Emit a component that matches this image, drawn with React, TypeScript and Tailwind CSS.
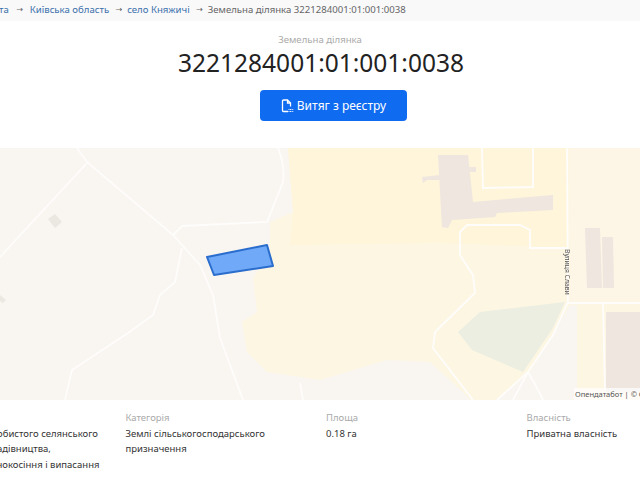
export default function App() {
  const road = "fill-none stroke-[#fefdfb]";
  return (
    <div className="w-[640px] h-[480px] overflow-hidden bg-white font-['Noto_Sans',sans-serif] text-[#333]">
      <div className="h-[22px] bg-[#f9f9fa] flex items-center whitespace-nowrap text-[9.6px] text-[#666] -mt-[1px]">
        <a className="text-[#3a70ab] -ml-[1px]">та</a>
        <span className="ml-[6px] mr-[5px] w-[10px] text-center font-['DejaVu_Sans',sans-serif] text-[8px]">→</span>
        <a className="text-[#3a70ab]">Київська область</a>
        <span className="ml-[5px] mr-[3px] w-[10px] text-center font-['DejaVu_Sans',sans-serif] text-[8px]">→</span>
        <a className="text-[#3a70ab]">село Княжичі</a>
        <span className="ml-[5px] mr-[3px] w-[10px] text-center font-['DejaVu_Sans',sans-serif] text-[8px]">→</span>
        <span>Земельна ділянка 3221284001:01:001:0038</span>
      </div>
      <div className="h-[127px] flex flex-col items-center pt-[12px]">
        <div className="text-[9.6px] leading-[14px] text-[#aaa]">Земельна ділянка</div>
        <h1 className="text-[24.5px] leading-[30px] mt-[1px] ml-[2px] text-[#222]">3221284001:01:001:0038</h1>
        <button className="mt-[12px] self-start ml-[260px] w-[147px] h-[31px] rounded-[4px] bg-[#0f6bf0] text-white text-[12px] flex items-center justify-center gap-[3px]">
          <svg width="13" height="14" viewBox="0 0 13 14" fill="none" stroke="white" strokeWidth="1.3">
            <path d="M7 12.5H2.5a1 1 0 0 1-1-1V2a1 1 0 0 1 1-1h4l3 3v3.5" />
            <path d="M6.5 1v3h3" />
            <path d="M7.5 10.5h5M7.5 12.5h5" strokeWidth="1.2" strokeDasharray="1 0.6" />
          </svg>
          Витяг з реєстру
        </button>
      </div>
      <div className="relative h-[252px] overflow-hidden">
        <svg width="640" height="252" viewBox="0 148 640 252" className="block bg-[#f9f6f2] blur-[0.5px]">
          <path d="M288 148L293 212L270 222L270 252L253 278L257 312L242 322L247 352L267 372L320 380L387 360L430 362L463 392L470 400L497 400L530 372L570 305L577 305L577 400L640 400L640 148Z" fill="#fdf6e3" />
          <path d="M288 148L293 212L290 245L440 243L567 248L567 148Z" fill="#fef5da" />
          <path d="M570 148H640V303H570Z" fill="#fdf6e6" />
          <path d="M458 332L480 312L565 302L553 328L523 372L472 350Z" fill="#ebeee1" />
          <path d="M438 155L468 155L473 202L553 195L553 210L497 213L495 217L452 220L448 228L442 227Z" fill="#efe6df" />
          <path d="M422 177L440 175L440 180L427 180L423 183ZM468 167L476 167L476 172L470 172Z" fill="#efe6df" />
          <path d="M585 228L600 228L602 288L587 288ZM602 237L613 237L614 288L603 288ZM606 312H640V392H606Z" fill="#efe6df" />
          <path d="M48 219L55 214L62 222L55 228ZM0 295L6 300L3 303L0 301Z" fill="#ebe8e2" />
          <g className={road} strokeWidth="1.8">
            <path d="M77 148L87 162L173 235L200 265L213 295L220 338L243 400" />
            <path d="M87 163L0 257" />
            <path d="M173 235L182 226L267 222L283 182Q285 165 278 148" />
            <path d="M182 248L175 282L160 295L153 315L128 333L72 370L65 400" />
            <path d="M300 383L303 400" />
            <path d="M567 148L568 302L553 335L528 372L497 400" />
            <path d="M528 372L513 400M528 372Q536 385 543 400" />
            <path d="M568 303H640M603 303L605 390" />
            <path d="M567 248H530V230L520 225H467L460 232V255L473 275L475 293L435 332L433 348L473 400" />
            <path d="M482 148L483 188L533 187V148" />
          </g>
          <path d="M207 257L267 245L273 266L214 275Z" fill="#6fa9f8" stroke="#2a6dcc" strokeWidth="2" strokeLinejoin="round" />
          <text x="565" y="249" transform="rotate(90 565 249)" fontSize="6.8" fill="#555" fontFamily="Noto Sans">Вулиця Слави</text>
        </svg>
        <div className="absolute right-0 bottom-0 w-[66px] h-[12px] overflow-hidden whitespace-nowrap bg-white/70 pl-[1px] text-[7.5px] leading-[12px] text-[#555]">Опендатабот | © OpenStreetMap</div>
      </div>
      <div className="-ml-[75px] w-[802px] grid grid-cols-[repeat(4,200.5px)] pt-[10px] text-[9.5px] leading-[15.5px]">
        <div>
          <div className="text-[#aaa]">Призначення</div>
          <div className="whitespace-nowrap">Для ведення особистого селянського<br />господарства, садівництва,<br />городництва, сінокосіння і випасання</div>
        </div>
        <div>
          <div className="text-[#aaa]">Категорія</div>
          <div className="w-[150px]">Землі сільськогосподарського призначення</div>
        </div>
        <div>
          <div className="text-[#aaa]">Площа</div>
          <div>0.18 га</div>
        </div>
        <div>
          <div className="text-[#aaa]">Власність</div>
          <div>Приватна власність</div>
        </div>
      </div>
    </div>
  );
}
